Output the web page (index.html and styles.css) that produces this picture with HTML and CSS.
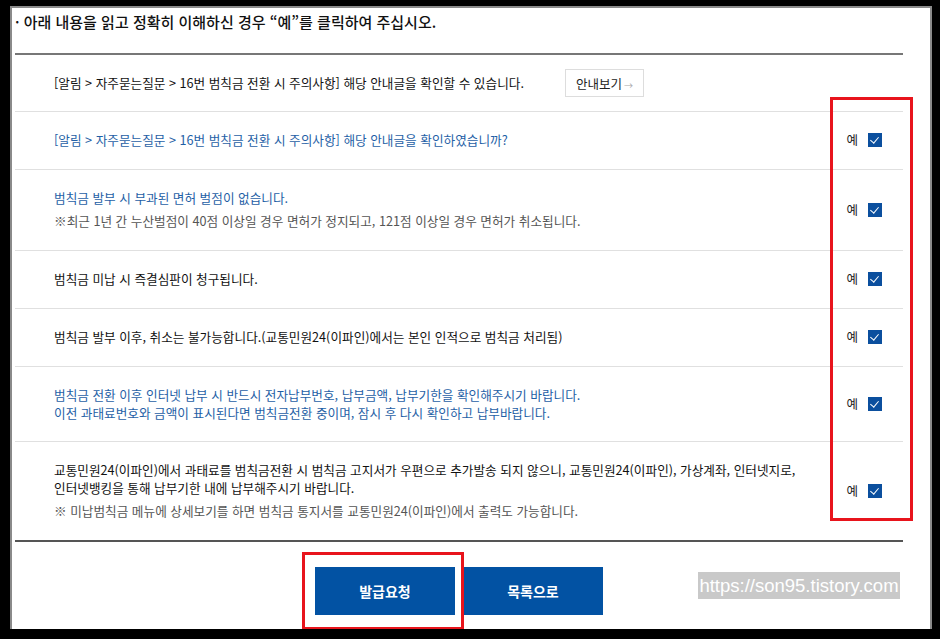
FILE: index.html
```html
<!DOCTYPE html>
<html lang="ko">
<head>
    <meta charset="UTF-8">
    <meta name="viewport" content="width=device-width, initial-scale=1.0">
    <title>범칙금 전환 확인</title>
    <link rel="stylesheet" href="styles.css">
</head>
<body>

    <div class="paper">
        <h2 class="guide">· 아래 내용을 읽고 정확히 이해하신 경우 “예”를 클릭하여 주십시오.</h2>

        <ul class="agree-list">
            <li class="agree-row first">
                <div class="agree-text">
                    <p class="dark">[알림 &gt; 자주묻는질문 &gt; 16번 범칙금 전환 시 주의사항] 해당 안내글을 확인할 수 있습니다.</p>
                </div>
                <button class="guide-button">안내보기<span class="arrow">→</span></button>
            </li>
            <li class="agree-row">
                <div class="agree-text">
                    <p class="blue">[알림 &gt; 자주묻는질문 &gt; 16번 범칙금 전환 시 주의사항] 해당 안내글을 확인하였습니까?</p>
                </div>
                <label class="yes">예 <span class="check"></span></label>
            </li>
            <li class="agree-row">
                <div class="agree-text">
                    <p class="blue">범칙금 발부 시 부과된 면허 벌점이 없습니다.</p>
                    <p class="note">※최근 1년 간 누산벌점이 40점 이상일 경우 면허가 정지되고, 121점 이상일 경우 면허가 취소됩니다.</p>
                </div>
                <label class="yes">예 <span class="check"></span></label>
            </li>
            <li class="agree-row">
                <div class="agree-text">
                    <p class="dark">범칙금 미납 시 즉결심판이 청구됩니다.</p>
                </div>
                <label class="yes">예 <span class="check"></span></label>
            </li>
            <li class="agree-row">
                <div class="agree-text">
                    <p class="dark">범칙금 발부 이후, 취소는 불가능합니다.(교통민원24(이파인)에서는 본인 인적으로 범칙금 처리됨)</p>
                </div>
                <label class="yes">예 <span class="check"></span></label>
            </li>
            <li class="agree-row tight">
                <div class="agree-text">
                    <p class="blue">범칙금 전환 이후 인터넷 납부 시 반드시 전자납부번호, 납부금액, 납부기한을 확인해주시기 바랍니다.<br>이전 과태료번호와 금액이 표시된다면 범칙금전환 중이며, 잠시 후 다시 확인하고 납부바랍니다.</p>
                </div>
                <label class="yes">예 <span class="check"></span></label>
            </li>
            <li class="agree-row">
                <div class="agree-text">
                    <p class="dark">교통민원24(이파인)에서 과태료를 범칙금전환 시 범칙금 고지서가 우편으로 추가발송 되지 않으니, 교통민원24(이파인), 가상계좌, 인터넷지로,<br>인터넷뱅킹을 통해 납부기한 내에 납부해주시기 바랍니다.</p>
                    <p class="note">※ 미납범칙금 메뉴에 상세보기를 하면 범칙금 통지서를 교통민원24(이파인)에서 출력도 가능합니다.</p>
                </div>
                <label class="yes">예 <span class="check"></span></label>
            </li>
        </ul>

        <div class="button-row">
            <button class="btn-blue">발급요청</button>
            <button class="btn-blue">목록으로</button>
        </div>

        <!-- highlight boxes and watermark drawn over the capture -->
        <div class="mark mark-checks"></div>
        <div class="mark mark-submit"></div>
        <div class="watermark">https://son95.tistory.com</div>
    </div>

</body>
</html>
```

FILE: styles.css
```css
* {
    box-sizing: border-box;
}

body {
    margin: 0;
    background: #000;
    font-family: "Noto Sans CJK KR", "Noto Sans", sans-serif;
    color: #222;
}

.paper {
    position: relative;
    margin: 8px 0 0 12px;
    width: 918px;
    height: 621px;
    background: #fff;
    padding: 3px 27px 0 3px;
    box-shadow: 0 0 0 2px #8a8a8a;
}

.guide {
    margin: 0;
    height: 42px;
    padding-top: 1px;
    font-size: 15px;
    line-height: 20px;
    font-weight: 500;
    color: #111;
}

.agree-list {
    list-style: none;
    margin: 0;
    padding: 0;
    border-top: 2px solid #777;
    border-bottom: 2px solid #555;
}

.agree-row {
    display: flex;
    align-items: center;
    padding: 19px 21px 20px 39px;
    border-top: 1px solid #e0e0e0;
}

.agree-row.first {
    border-top: none;
    padding-top: 14px;
    padding-bottom: 14px;
}

.agree-row.tight {
    padding-bottom: 19px;
}

.agree-row.first .agree-text {
    flex: none;
}

.agree-text {
    flex: 1;
}

.agree-text p {
    margin: 0;
    font-size: 12.65px;
    line-height: 18px;
}

.agree-text p.dark {
    color: #111;
}

.agree-text p.blue {
    color: #1f5fa6;
}

.agree-text p.note {
    margin-top: 5px;
    color: #555;
}

.guide-button {
    width: 79px;
    height: 28px;
    margin-left: 41px;
    border: 1px solid #ddd;
    background: #fff;
    font-family: inherit;
    font-size: 12.5px;
    color: #222;
    padding: 0;
    cursor: pointer;
}

.guide-button .arrow {
    font-size: 9px;
    color: #aaa;
    margin-left: 2px;
}

.yes {
    display: flex;
    align-items: center;
    gap: 10px;
    font-size: 12.5px;
    line-height: 18px;
    color: #222;
}

.check {
    width: 14px;
    height: 14px;
    background: #0b4f9e;
    position: relative;
}

.check::after {
    content: '';
    position: absolute;
    left: 4px;
    top: 2px;
    width: 4px;
    height: 7px;
    border-right: 1.5px solid #fff;
    border-bottom: 1.5px solid #fff;
    transform: rotate(40deg);
}

.button-row {
    display: flex;
    justify-content: center;
    gap: 8px;
    margin-top: 25px;
}

.btn-blue {
    width: 140px;
    height: 48px;
    border: none;
    background: #0252a3;
    color: #fff;
    font-family: inherit;
    font-size: 14px;
    font-weight: 700;
    cursor: pointer;
}

.mark {
    position: absolute;
    border: 3px solid #e8141c;
}

.mark-checks {
    left: 818px;
    top: 89px;
    width: 83px;
    height: 424px;
}

.mark-submit {
    left: 290px;
    top: 544px;
    width: 162px;
    height: 78px;
}

.watermark {
    position: absolute;
    left: 686px;
    top: 564px;
    width: 202px;
    height: 27px;
    background: #c9c9c9;
    color: #fff;
    font-family: "Liberation Sans", Arial, sans-serif;
    font-size: 18.5px;
    line-height: 27px;
    text-align: center;
    white-space: nowrap;
}
```
